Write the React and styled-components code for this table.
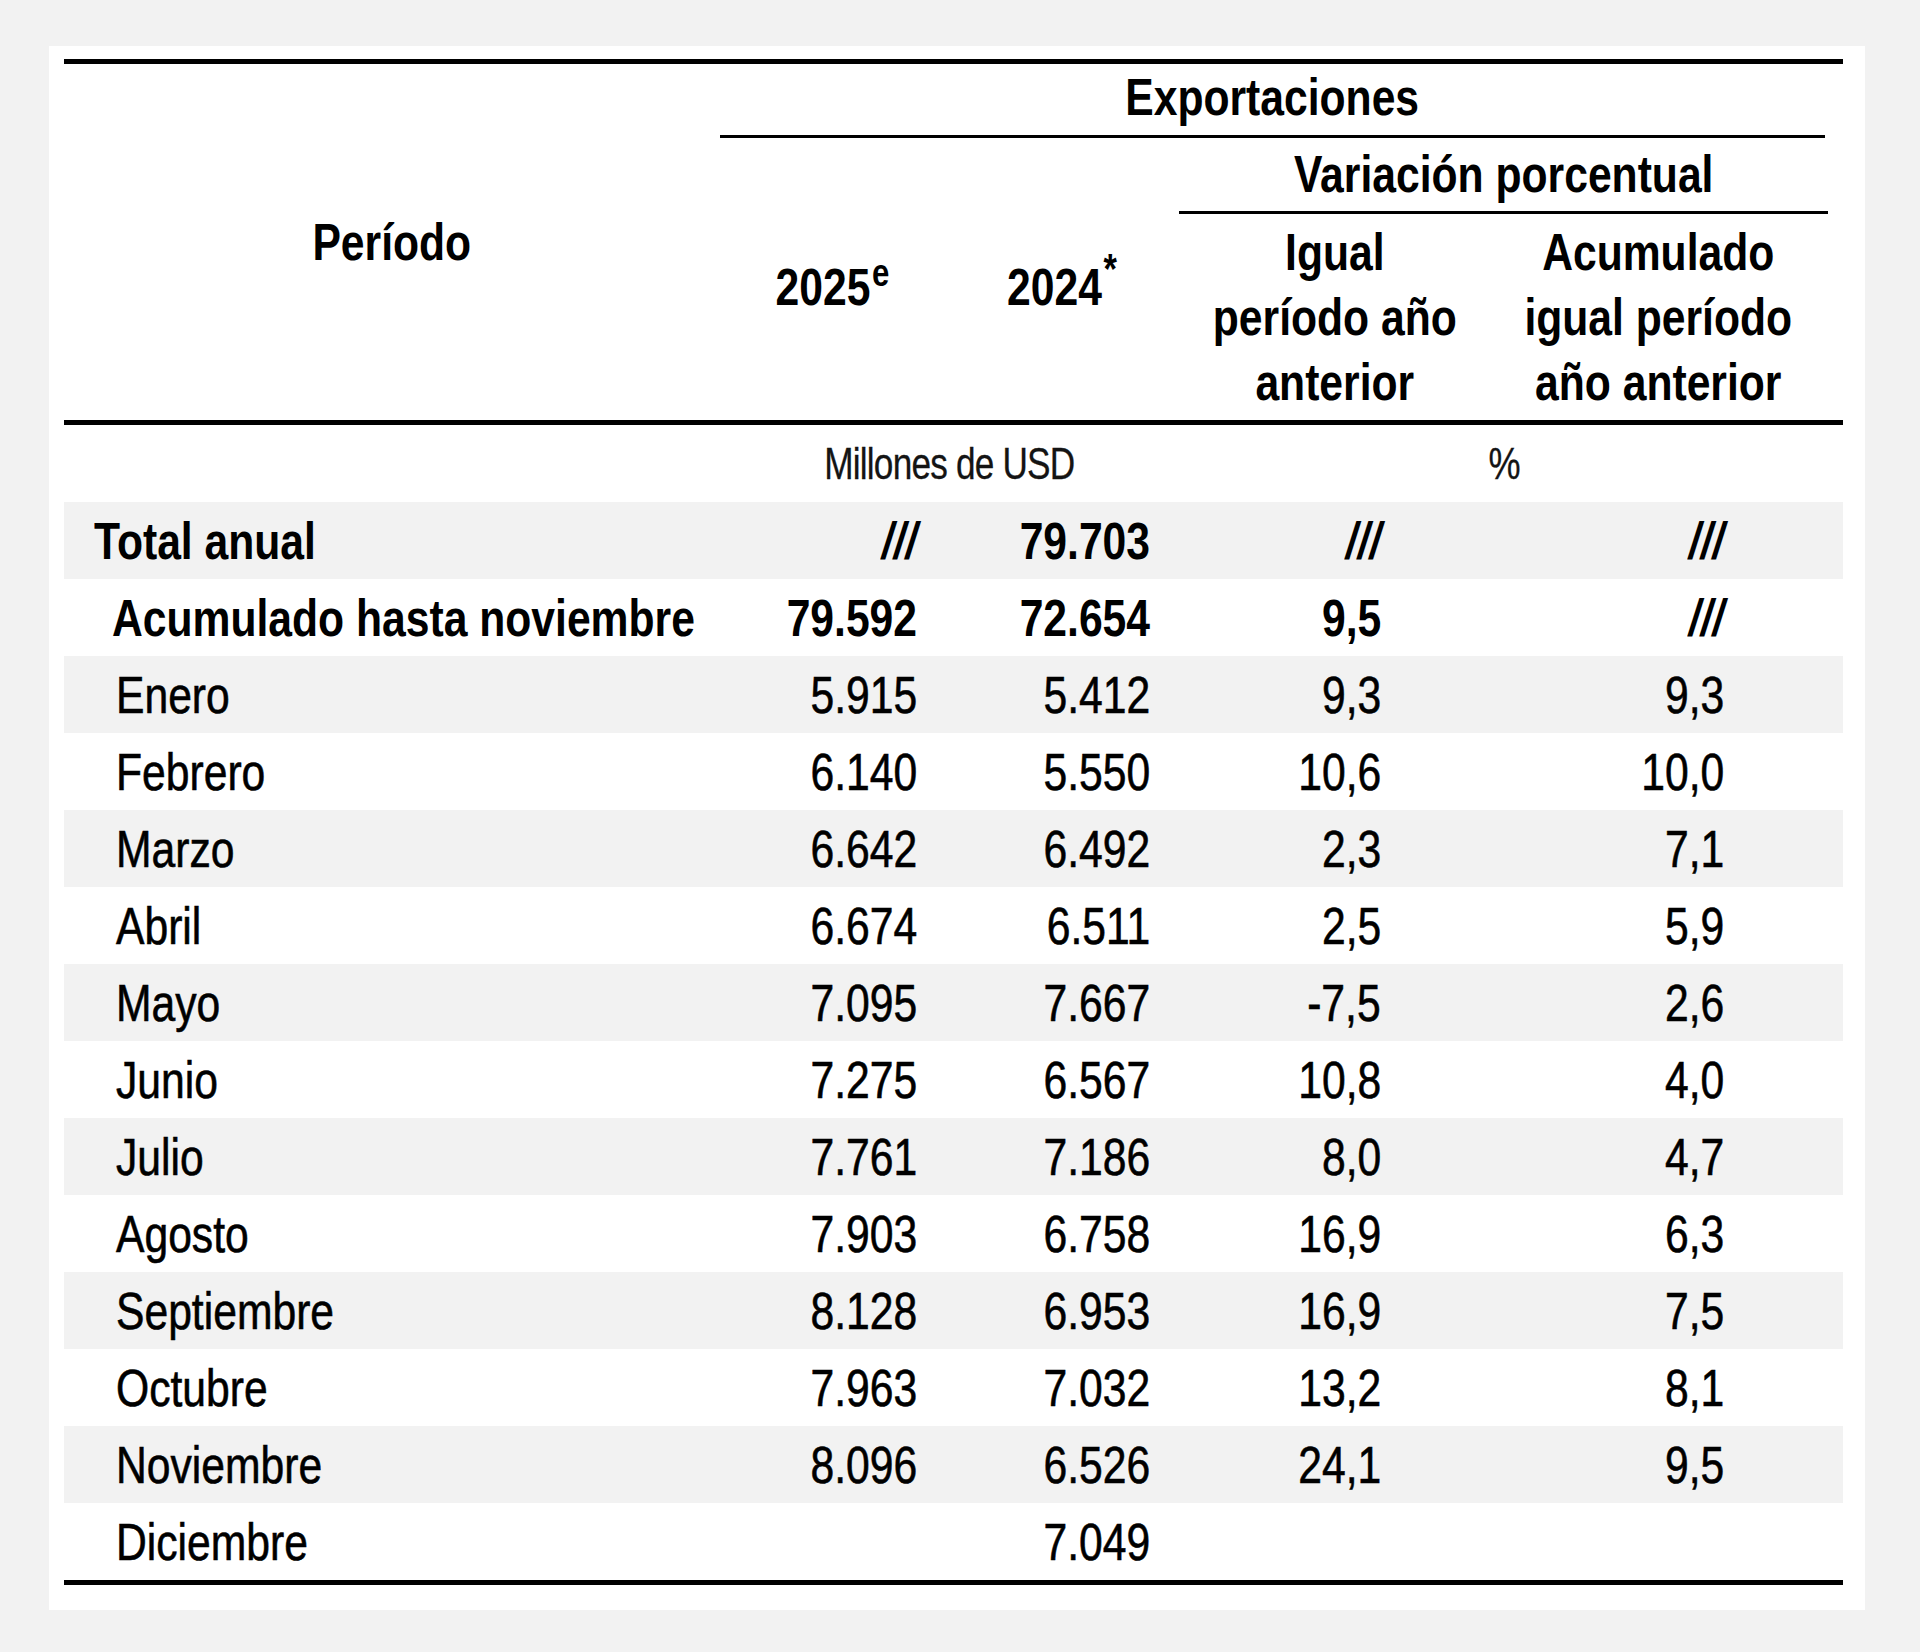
import React from "react";
import styled, { createGlobalStyle } from "styled-components";

const COLS = "656px 225px 234px 311px 353px";
const PAD_RIGHT = [0, 28, 29, 109, 119];

const rows = [
	{ label: "Total anual", indent: 30, bold: true, values: ["///", "79.703", "///", "///"] },
	{ label: "Acumulado hasta noviembre", indent: 48, bold: true, values: ["79.592", "72.654", "9,5", "///"] },
	{ label: "Enero", values: ["5.915", "5.412", "9,3", "9,3"] },
	{ label: "Febrero", values: ["6.140", "5.550", "10,6", "10,0"] },
	{ label: "Marzo", values: ["6.642", "6.492", "2,3", "7,1"] },
	{ label: "Abril", values: ["6.674", "6.511", "2,5", "5,9"] },
	{ label: "Mayo", values: ["7.095", "7.667", "-7,5", "2,6"] },
	{ label: "Junio", values: ["7.275", "6.567", "10,8", "4,0"] },
	{ label: "Julio", values: ["7.761", "7.186", "8,0", "4,7"] },
	{ label: "Agosto", values: ["7.903", "6.758", "16,9", "6,3"] },
	{ label: "Septiembre", values: ["8.128", "6.953", "16,9", "7,5"] },
	{ label: "Octubre", values: ["7.963", "7.032", "13,2", "8,1"] },
	{ label: "Noviembre", values: ["8.096", "6.526", "24,1", "9,5"] },
	{ label: "Diciembre", values: ["", "7.049", "", ""] },
];

export default function App() {
	return (
		<Page>
			<GlobalStyle />
			<Panel>
				<Table>
					<Head>
						<HeadCell $col="1" $row="1 / 4">
							<Narrow>Período</Narrow>
						</HeadCell>
						<HeadCell $col="2 / 6" $row="1" $rule $mr={18} $pad="0 0 4px 0">
							<Narrow>Exportaciones</Narrow>
						</HeadCell>
						<HeadCell $col="4 / 6" $row="2" $rule $mr={15}>
							<Narrow>Variación porcentual</Narrow>
						</HeadCell>
						<HeadCell $col="2" $row="2 / 4" $pad="16px 0 0 0">
							<Narrow>
								2025<Sup $raise={19} $size={38}>e</Sup>
							</Narrow>
						</HeadCell>
						<HeadCell $col="3" $row="2 / 4" $pad="16px 0 0 0">
							<Narrow>
								2024<Sup $raise={22} $size={42}>*</Sup>
							</Narrow>
						</HeadCell>
						<HeadCell $col="4" $row="3">
							<Narrow>
								Igual
								<br />
								período año
								<br />
								anterior
							</Narrow>
						</HeadCell>
						<HeadCell $col="5" $row="3" $pad="0 16px 0 0">
							<Narrow>
								Acumulado
								<br />
								igual período
								<br />
								año anterior
							</Narrow>
						</HeadCell>
					</Head>

					<Units>
						<Unit $col="2 / 4">
							<Narrow $scale={0.8}>Millones de USD</Narrow>
						</Unit>
						<Unit $col="4 / 6" $pr={14}>
							<Narrow>%</Narrow>
						</Unit>
					</Units>

					{rows.map((row, i) => (
						<Row key={row.label} $shade={i % 2 === 0} $bold={row.bold}>
							<Label $indent={row.indent || 52}>
								<Narrow $origin="left center">{row.label}</Narrow>
							</Label>
							{row.values.map((v, j) => (
								<Num key={j} $pr={PAD_RIGHT[j + 1]}>
									<Narrow $origin="right center">
										{v === "///" ? <Slash>///</Slash> : v}
									</Narrow>
								</Num>
							))}
						</Row>
					))}
				</Table>
			</Panel>
		</Page>
	);
}

const GlobalStyle = createGlobalStyle`
html, body {
	margin: 0;
	padding: 0;
	background: #f2f2f2;
}
body {
	font-family: "Liberation Sans", Arial, sans-serif;
	color: #000;
}
`;

const Page = styled.div`
padding: 46px 0 0 49px;
min-height: 1652px;
box-sizing: border-box;
`;

const Panel = styled.div`
width: 1816px;
height: 1564px;
background: #fff;
box-sizing: border-box;
padding: 13px 0 0 15px;
`;

const Table = styled.div`
width: 1779px;
border-bottom: 5px solid #000;
`;

// the source uses a narrow face; squeeze Liberation Sans to Arial Narrow widths
const Narrow = styled.span`
display: inline-block;
white-space: nowrap;
transform: scaleX(${(p) => p.$scale || 0.82});
transform-origin: ${(p) => p.$origin || "center center"};
`;

const Head = styled.div`
display: grid;
grid-template-columns: ${COLS};
grid-template-rows: 74px 76px 206px;
border-top: 5px solid #000;
border-bottom: 5px solid #000;
font-weight: 700;
font-size: 52px;
`;

const HeadCell = styled.div`
grid-column: ${(p) => p.$col};
grid-row: ${(p) => p.$row};
display: flex;
align-items: center;
justify-content: center;
text-align: center;
line-height: 65px;
box-sizing: border-box;
margin-right: ${(p) => p.$mr || 0}px;
padding: ${(p) => p.$pad || "0"};
border-bottom: ${(p) => (p.$rule ? "3px solid #000" : "none")};
`;

const Sup = styled.span`
position: relative;
top: -${(p) => p.$raise}px;
font-size: ${(p) => p.$size || 30}px;
line-height: 0;
margin-left: 2px;
`;

const Units = styled.div`
display: grid;
grid-template-columns: ${COLS};
height: 77px;
align-items: center;
font-size: 44px;
font-weight: 400;
letter-spacing: -1px;
color: #141414;
-webkit-text-stroke: 0.3px #141414;
`;

const Unit = styled.div`
grid-column: ${(p) => p.$col};
text-align: center;
padding-right: ${(p) => p.$pr || 0}px;
`;

const Row = styled.div`
display: grid;
grid-template-columns: ${COLS};
height: 77px;
align-items: center;
background: ${(p) => (p.$shade ? "#f2f2f2" : "transparent")};
font-size: 52px;
font-weight: ${(p) => (p.$bold ? 700 : 400)};
-webkit-text-stroke: ${(p) => (p.$bold ? "0" : "0.6px #000")};
`;

const Label = styled.div`
padding-left: ${(p) => p.$indent}px;
white-space: nowrap;
`;

const Num = styled.div`
text-align: right;
padding-right: ${(p) => p.$pr}px;
white-space: nowrap;
`;

const Slash = styled.span`
font-style: italic;
`;
